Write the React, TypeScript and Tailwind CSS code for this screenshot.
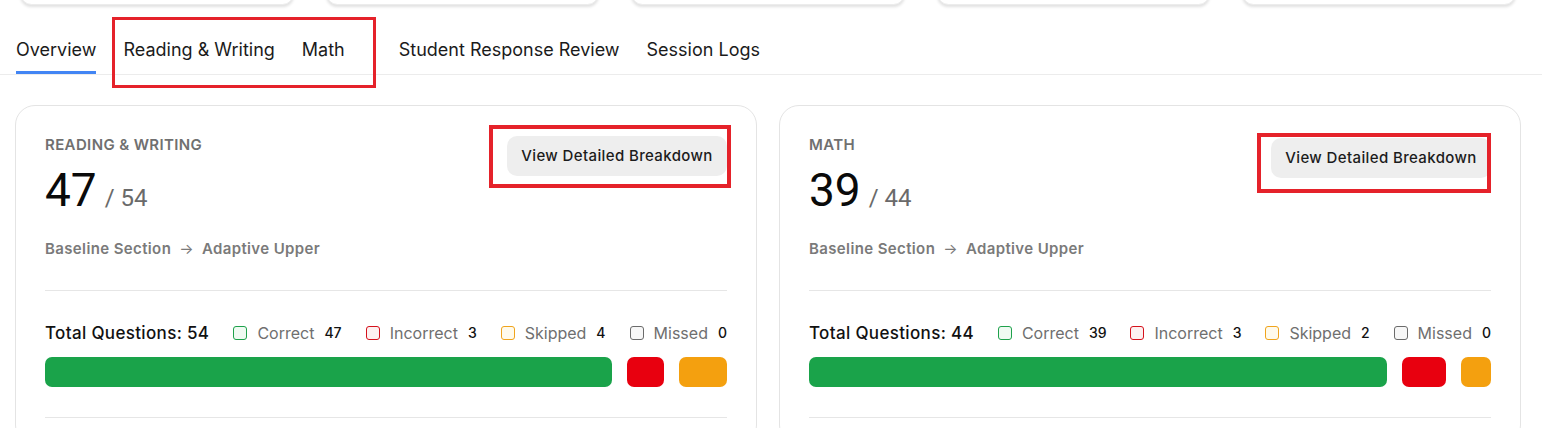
import React from "react";

const tabs = ["Overview", "Reading & Writing", "Math", "Student Response Review", "Session Logs"];

type Section = {
  title: string;
  score: number;
  total: number;
  correct: number;
  incorrect: number;
  skipped: number;
  missed: number;
  buttonPad: string;
};

const sections: Section[] = [
  { title: "Reading & Writing", score: 47, total: 54, correct: 47, incorrect: 3, skipped: 4, missed: 0, buttonPad: "mt-[1px]" },
  { title: "Math", score: 39, total: 44, correct: 39, incorrect: 3, skipped: 2, missed: 0, buttonPad: "mt-[3px]" },
];

function Legend({ label, value, box }: { label: string; value: number; box: string }) {
  return (
    <div className="flex items-center">
      <span className={`h-[14px] w-[14px] rounded-[3px] border ${box}`} />
      <span className="ml-[10px] text-[16px] text-[#6f6f6f]">{label}</span>
      <span className="ml-[10px] text-[14px] font-medium text-[#111]">{value}</span>
    </div>
  );
}

function SectionCard({ s }: { s: Section }) {
  return (
    <div className="h-[340px] rounded-[20px] border border-[#e4e4e4] bg-white px-[29px] pt-[29px]">
      <div className="flex items-start justify-between">
        <div>
          <div className="text-[15px] font-semibold uppercase leading-5 tracking-[0.025em] text-[#707070]">{s.title}</div>
          <div className="mt-[12px] flex items-baseline font-['Roboto',sans-serif]">
            <span className="text-[46px] leading-[46px] text-[#0a0a0a]">{s.score}</span>
            <span className="ml-[8px] text-[24px] text-[#6a6a6a]">/ {s.total}</span>
          </div>
          <div className="mt-[23px] flex items-center text-[15px] font-semibold leading-5 tracking-[0.025em] text-[#7a7a7a]">
            <span>Baseline Section</span>
            <span className="mx-[8px] font-normal">→</span>
            <span>Adaptive Upper</span>
          </div>
        </div>
        <button className={`${s.buttonPad} h-[40px] w-[220px] rounded-[10px] bg-[#eeeeee] text-[15px] font-medium tracking-[0.025em] text-[#1c1c1c]`}>
          View Detailed Breakdown
        </button>
      </div>
      <div className="mt-[31px] border-t border-[#e6e6e6]" />
      <div className="mt-[30px] flex items-center justify-between leading-6">
        <span className="text-[17px] font-medium tracking-[0.02em] text-[#111]">Total Questions: {s.total}</span>
        <Legend label="Correct" value={s.correct} box="border-[#1ea14b] bg-[#effaf2]" />
        <Legend label="Incorrect" value={s.incorrect} box="border-[#d5121c] bg-[#fdf0f0]" />
        <Legend label="Skipped" value={s.skipped} box="border-[#f0a41c] bg-[#fffaeb]" />
        <Legend label="Missed" value={s.missed} box="border-[#6b6b6b] bg-[#f7f7f7]" />
      </div>
      <div className="mt-[12px] flex h-[30px] gap-[15px]">
        <div className="rounded-[7px] bg-[#1aa34a]" style={{ flexGrow: s.correct, flexBasis: 0 }} />
        <div className="rounded-[7px] bg-[#e8000f]" style={{ flexGrow: s.incorrect, flexBasis: 0 }} />
        <div className="rounded-[7px] bg-[#f4a00f]" style={{ flexGrow: s.skipped, flexBasis: 0 }} />
      </div>
      <div className="mt-[30px] border-t border-[#e6e6e6]" />
    </div>
  );
}

export default function App() {
  return (
    <div className="relative h-[428px] w-[1542px] overflow-hidden bg-white font-['Inter',sans-serif]">
      <div className="mt-[-18px] grid grid-cols-5 gap-[32px] px-[20px] pr-[26px]">
        {[0, 1, 2, 3, 4].map((i) => (
          <div key={i} className="h-[23px] rounded-[14px] border border-[#ececec] bg-white shadow-[0_2px_3px_rgba(0,0,0,0.12)]" />
        ))}
      </div>

      <div className="mt-[32px] flex border-b border-[#ececec] pl-[16px]">
        {tabs.map((t, i) => (
          <div
            key={t}
            className={`pt-[1px] text-[18px] leading-6 text-[#1b1b1b] ${i === 0 ? "border-b-[3px] border-[#4285f4] pb-[9px]" : "pb-[12px]"} ${
              i === 2 ? "mr-[54px]" : "mr-[27px]"
            }`}
          >
            {t}
          </div>
        ))}
      </div>

      <div className="mt-[30px] grid grid-cols-2 gap-[22px] px-[15px] pr-[21px]">
        {sections.map((s) => (
          <SectionCard key={s.title} s={s} />
        ))}
      </div>

      <div className="absolute left-[112px] top-[17px] h-[71px] w-[264px] border-[3px] border-[#e5222a]" />
      <div className="absolute left-[489px] top-[125px] h-[63px] w-[242px] border-[4px] border-[#e5222a]" />
      <div className="absolute left-[1257px] top-[133px] h-[60px] w-[234px] border-[4px] border-[#e5222a]" />
    </div>
  );
}
